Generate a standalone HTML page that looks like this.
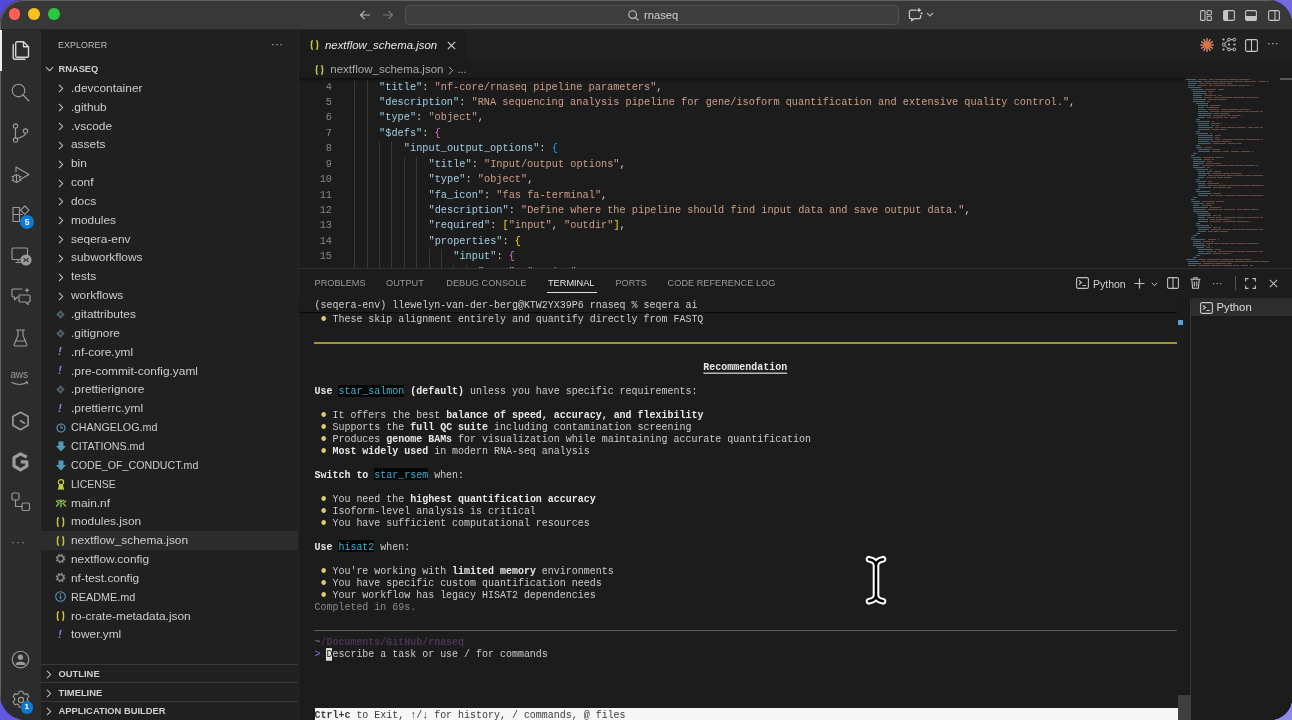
<!DOCTYPE html>
<html><head><meta charset="utf-8">
<style>
*{box-sizing:border-box;margin:0;padding:0}
html,body{width:1292px;height:720px;overflow:hidden}
body{background:linear-gradient(135deg,#5546dc 0%,#6a5ee0 50%,#8d8be8 100%);font-family:"Liberation Sans",sans-serif;position:relative}
.win{will-change:transform;position:absolute;left:0;top:0;width:1292px;height:720px;border-radius:23px 24px 22px 26px;overflow:hidden;background:#1c1c1c}
.frame{position:absolute;left:0;top:0;width:1320px;height:750px;border-radius:23px;box-shadow:inset 1px 1px 0 0 #626262;pointer-events:none}
.abs{position:absolute}
svg{position:absolute;overflow:visible}
.title{left:0;top:0;width:1292px;height:30px;background:#383838;border-bottom:1px solid #262626}
.act{left:0;top:30px;width:41px;height:690px;background:#2c2c2c}
.side{left:41px;top:30px;width:258px;height:690px;background:#202020;border-right:1px solid #252525}
.ed{left:299px;top:30px;width:993px;height:690px;background:#1c1c1c}
.mono{font-family:"Liberation Mono",monospace}
.t{position:absolute;white-space:pre;line-height:1}
.row{position:absolute;left:0;width:257px;height:18.85px;font-size:11.5px;color:#cccccc;line-height:18.85px;white-space:pre}
.row span.n{position:absolute;left:29.5px;top:0}
.ai{stroke:#9a9a9a;fill:none;stroke-width:1.15;stroke-linecap:round;stroke-linejoin:round}
</style></head><body>
<div class="win">
  <!-- TITLE BAR -->
  <div class="abs title"></div>
  <div class="abs" style="left:8.6px;top:8.1px;width:11.6px;height:11.6px;border-radius:50%;background:#fe5f57"></div>
  <div class="abs" style="left:28.1px;top:8.1px;width:11.6px;height:11.6px;border-radius:50%;background:#f7c21c"></div>
  <div class="abs" style="left:48.2px;top:8.1px;width:11.6px;height:11.6px;border-radius:50%;background:#28c840"></div>
  <svg style="left:359px;top:10px" width="12" height="10" viewBox="0 0 12 10"><path d="M11 5H1.5M5.5 1L1.5 5l4 4" stroke="#b8b8b8" stroke-width="1.1" fill="none"/></svg>
  <svg style="left:381.5px;top:10px" width="12" height="10" viewBox="0 0 12 10"><path d="M1 5h9.5M6.5 1l4 4-4 4" stroke="#777" stroke-width="1.1" fill="none"/></svg>
  <div class="abs" style="left:405px;top:5px;width:494px;height:20px;border-radius:4px;background:#3e3e3e;border:1px solid #525252"></div>
  <svg style="left:628px;top:9.5px" width="11" height="11" viewBox="0 0 11 11"><circle cx="4.6" cy="4.6" r="3.8" stroke="#c8c8c8" stroke-width="1.1" fill="none"/><path d="M7.4 7.4l3 3" stroke="#c8c8c8" stroke-width="1.1"/></svg>
  <div class="t" style="left:644px;top:10px;font-size:11.2px;color:#d0d0d0">rnaseq</div>
  <svg style="left:908px;top:7px" width="16" height="15" viewBox="0 0 16 15"><path d="M8.5 3.2H3.2Q1.4 3.2 1.4 5V10Q1.4 11.6 3 11.6H4.2L3.6 13.8 6.6 11.6H11Q12.6 11.6 12.6 10V8" stroke="#c8c8c8" stroke-width="1.25" fill="none" stroke-linejoin="round"/><path d="M11 0.6L11.8 2.3 13.5 3.1 11.8 3.9 11 5.6 10.2 3.9 8.5 3.1 10.2 2.3z" fill="#d0d0d0"/><path d="M13.7 4.8L14.2 5.8 15.2 6.3 14.2 6.8 13.7 7.8 13.2 6.8 12.2 6.3 13.2 5.8z" fill="#d0d0d0"/></svg>
  <svg style="left:926px;top:11.8px" width="8" height="6" viewBox="0 0 8 6"><path d="M1 1l3 3 3-3" stroke="#b0b0b0" stroke-width="1.1" fill="none"/></svg>
  <!-- layout icons -->
  <svg style="left:1200px;top:9.5px" width="12" height="11" viewBox="0 0 12 11"><rect x="0.6" y="0.6" width="4.4" height="9.8" rx="1" stroke="#bdbdbd" stroke-width="1.1" fill="none"/><rect x="7" y="0.6" width="4.4" height="4.2" rx="1" stroke="#bdbdbd" stroke-width="1.1" fill="none"/><rect x="7" y="6.2" width="4.4" height="4.2" rx="1" stroke="#bdbdbd" stroke-width="1.1" fill="none"/></svg>
  <svg style="left:1222.5px;top:9.5px" width="12" height="11" viewBox="0 0 12 11"><rect x="0.6" y="0.6" width="10.8" height="9.8" rx="1.5" stroke="#c5c5c5" stroke-width="1.1" fill="none"/><rect x="0.6" y="0.6" width="4.5" height="9.8" fill="#c5c5c5"/></svg>
  <svg style="left:1245px;top:9.5px" width="12" height="11" viewBox="0 0 12 11"><rect x="0.6" y="0.6" width="10.8" height="9.8" rx="1.5" stroke="#c5c5c5" stroke-width="1.1" fill="none"/><rect x="0.6" y="6" width="10.8" height="4.4" fill="#c5c5c5"/></svg>
  <svg style="left:1267.5px;top:9.5px" width="12" height="11" viewBox="0 0 12 11"><rect x="0.6" y="0.6" width="10.8" height="9.8" rx="1.5" stroke="#c5c5c5" stroke-width="1.1" fill="none"/><path d="M7 0.6v9.8" stroke="#c5c5c5" stroke-width="1.1"/></svg>

  <!-- ACTIVITY BAR -->
  <div class="abs act"></div>
  <div class="abs" style="left:0;top:30px;width:2.2px;height:41px;background:#f0f0f0;z-index:5"></div>
  <!-- explorer -->
  <svg style="left:11.5px;top:41px" width="18" height="19" viewBox="0 0 18 19"><g fill="none" stroke="#d6d6d6" stroke-width="1.4" stroke-linejoin="round" stroke-linecap="round"><path d="M5 0.8H11.5L16.5 5.8V15a1.3 1.3 0 0 1-1.3 1.3H5A1.3 1.3 0 0 1 3.7 15V2.1A1.3 1.3 0 0 1 5 0.8z"/><path d="M11.5 0.8V5.8H16.5"/><path d="M1.2 3.8V16.2a2 2 0 0 0 2 2H13"/></g></svg>
  <!-- search -->
  <svg style="left:11px;top:83px" width="19" height="19" viewBox="0 0 19 19"><circle class="ai" cx="7.5" cy="7.5" r="6.3"/><path class="ai" d="M12 12l6 6"/></svg>
  <!-- scm -->
  <svg style="left:12px;top:123px" width="17" height="20" viewBox="0 0 17 20"><circle class="ai" cx="3.5" cy="3" r="2.2"/><circle class="ai" cx="3.5" cy="17" r="2.2"/><circle class="ai" cx="13.5" cy="8" r="2.2"/><path class="ai" d="M3.5 5.2v9.6M13.5 10.2c0 3-4 3.5-8.5 5.5"/></svg>
  <!-- run debug -->
  <svg style="left:11px;top:166px" width="20" height="18" viewBox="0 0 20 18"><path class="ai" d="M5 5.5V1l13 7.5-8 4.6"/><circle class="ai" cx="5.5" cy="12.5" r="3.6"/><path class="ai" d="M1 10.5h1.5M8.5 10.5H10M1 14.5h1.5M8.5 14.5H10M5.5 9v7"/></svg>
  <!-- extensions -->
  <svg style="left:12px;top:205px" width="19" height="19" viewBox="0 0 19 19"><path class="ai" d="M1 2.5h6.5v7H1zM1 9.5h6.5v7H1zM7.5 9.5H10"/><path class="ai" d="M12.8 1l4.2 4.2-4.2 4.2-4.2-4.2z"/></svg>
  <div class="abs" style="left:20px;top:214.5px;width:14px;height:14px;border-radius:50%;background:#0a7bd6;color:#fff;font-size:8.5px;font-weight:bold;text-align:center;line-height:14px">5</div>
  <!-- remote explorer -->
  <svg style="left:10.5px;top:246.5px" width="22" height="20" viewBox="0 0 22 20"><path class="ai" d="M9.5 12.5H2a1 1 0 0 1-1-1V2a1 1 0 0 1 1-1h13.5a1 1 0 0 1 1 1v6M5 15.5h4.5M7.2 12.5v3"/><circle cx="15" cy="13" r="5.6" fill="#9a9a9a"/><path d="M12.6 11.2l1.8 1.8-1.8 1.8M17.4 11.2l-1.8 1.8 1.8 1.8" stroke="#2c2c2c" stroke-width="1.1" fill="none"/></svg>
  <!-- chat -->
  <svg style="left:11px;top:287px" width="21" height="18" viewBox="0 0 21 18"><path class="ai" d="M11 2H2a1 1 0 0 0-1 1v6a1 1 0 0 0 1 1h1.5v3l3-3H7"/><path class="ai" d="M8 8h10a1 1 0 0 1 1 1v5a1 1 0 0 1-1 1h-1v2.5L14.5 15H9a1 1 0 0 1-1-1z"/><path d="M16 0.5l.8 1.9 1.9.8-1.9.8-.8 1.9-.8-1.9-1.9-.8 1.9-.8z" fill="#9a9a9a"/></svg>
  <!-- testing flask -->
  <svg style="left:13px;top:329px" width="15" height="18" viewBox="0 0 15 18"><path class="ai" d="M3.5 1h8M5 1v5.5L1.2 15.5a1 1 0 0 0 .9 1.5h10.8a1 1 0 0 0 .9-1.5L10 6.5V1M3 12h9"/></svg>
  <!-- aws -->
  <div class="t" style="left:10.5px;top:370px;font-size:10px;color:#9a9a9a;letter-spacing:-0.2px">aws</div>
  <svg style="left:10px;top:381px" width="20" height="5" viewBox="0 0 20 5"><path d="M1.5 1.2c5 2.8 11 2.8 16 0" stroke="#9a9a9a" stroke-width="1.1" fill="none"/><path d="M15.5 0.6l2.3.5-.6 2.2" stroke="#9a9a9a" stroke-width="1" fill="none"/></svg>
  <!-- hex -->
  <svg style="left:11px;top:411px" width="19" height="20" viewBox="0 0 19 20"><path class="ai" style="stroke-width:1.6" d="M9.5 1.2l7.6 4.3v8.8l-7.6 4.4-7.6-4.4V5.5z"/><path class="ai" style="stroke-width:1.6" d="M9.5 9.8l4 2.4"/></svg>
  <!-- G seqera -->
  <svg style="left:11px;top:451.5px" width="19" height="20" viewBox="0 0 19 20"><path d="M15.8 5.2L9.5 1.8 3 5.6V14l6.5 3.8 6.3-3.6V9.8H9.8" stroke="#9c9c9c" stroke-width="3.2" fill="none" stroke-linejoin="round"/></svg>
  <!-- graph -->
  <svg style="left:11px;top:492px" width="20" height="20" viewBox="0 0 20 20"><rect class="ai" x="1" y="1" width="7" height="7" rx="1.5"/><rect class="ai" x="11" y="11" width="7.5" height="7.5" rx="1.5"/><path class="ai" d="M4.5 8v6.5H11"/></svg>
  <div class="t" style="left:11px;top:536px;font-size:12px;color:#999;letter-spacing:1px">···</div>
  <!-- account -->
  <svg style="left:10.5px;top:650px" width="19" height="19" viewBox="0 0 19 19"><circle class="ai" cx="9.5" cy="9.5" r="8.3"/><circle cx="9.5" cy="7.3" r="2.7" fill="#9a9a9a"/><path d="M4.8 13.6c1-2.4 8.4-2.4 9.4 0v1.4H4.8z" fill="#9a9a9a"/></svg>
  <!-- settings -->
  <svg style="left:11px;top:690px" width="20" height="20" viewBox="0 0 20 20"><path class="ai" d="M8.2 1.2h3.6l.5 2.3 1.6.9 2.2-.8 1.8 3.1-1.7 1.6v1.8l1.7 1.6-1.8 3.1-2.2-.8-1.6.9-.5 2.3H8.2l-.5-2.3-1.6-.9-2.2.8-1.8-3.1 1.7-1.6V8.3L2.1 6.7l1.8-3.1 2.2.8 1.6-.9z"/><circle class="ai" cx="10" cy="10" r="2.6"/></svg>
  <div class="abs" style="left:20.5px;top:701px;width:12.5px;height:12.5px;border-radius:50%;background:#0a78d4;color:#fff;font-size:8px;font-weight:bold;text-align:center;line-height:12.5px">1</div>

  <!-- SIDEBAR -->
  <div class="abs side" id="side">
<div class="t" style="left:17px;top:11px;font-size:8.9px;color:#bdbdbd;letter-spacing:0.1px">EXPLORER</div>
<div class="t" style="left:230px;top:9px;font-size:11px;color:#bbb;letter-spacing:0.5px">···</div>
<svg style="left:4px;top:36px" width="9" height="6" viewBox="0 0 9 6"><path d="M0.8 1l3.7 3.7L8.2 1" stroke="#c5c5c5" stroke-width="1.05" fill="none"/></svg>
<div class="t" style="left:17.5px;top:34.5px;font-size:9.3px;color:#d0d0d0;font-weight:bold">RNASEQ</div>
<div class="row" style="top:48.80px"><svg style="left:16.5px;top:5.5px" width="6" height="9" viewBox="0 0 6 9"><path d="M1 0.8l3.6 3.7L1 8.2" stroke="#c5c5c5" stroke-width="1.05" fill="none"/></svg><span class="n" style="transform:scaleX(1.035);transform-origin:0 50%">.devcontainer</span></div>
<div class="row" style="top:67.65px"><svg style="left:16.5px;top:5.5px" width="6" height="9" viewBox="0 0 6 9"><path d="M1 0.8l3.6 3.7L1 8.2" stroke="#c5c5c5" stroke-width="1.05" fill="none"/></svg><span class="n" style="transform:scaleX(1.035);transform-origin:0 50%">.github</span></div>
<div class="row" style="top:86.50px"><svg style="left:16.5px;top:5.5px" width="6" height="9" viewBox="0 0 6 9"><path d="M1 0.8l3.6 3.7L1 8.2" stroke="#c5c5c5" stroke-width="1.05" fill="none"/></svg><span class="n" style="transform:scaleX(1.035);transform-origin:0 50%">.vscode</span></div>
<div class="row" style="top:105.35px"><svg style="left:16.5px;top:5.5px" width="6" height="9" viewBox="0 0 6 9"><path d="M1 0.8l3.6 3.7L1 8.2" stroke="#c5c5c5" stroke-width="1.05" fill="none"/></svg><span class="n" style="transform:scaleX(1.035);transform-origin:0 50%">assets</span></div>
<div class="row" style="top:124.20px"><svg style="left:16.5px;top:5.5px" width="6" height="9" viewBox="0 0 6 9"><path d="M1 0.8l3.6 3.7L1 8.2" stroke="#c5c5c5" stroke-width="1.05" fill="none"/></svg><span class="n" style="transform:scaleX(1.035);transform-origin:0 50%">bin</span></div>
<div class="row" style="top:143.05px"><svg style="left:16.5px;top:5.5px" width="6" height="9" viewBox="0 0 6 9"><path d="M1 0.8l3.6 3.7L1 8.2" stroke="#c5c5c5" stroke-width="1.05" fill="none"/></svg><span class="n" style="transform:scaleX(1.035);transform-origin:0 50%">conf</span></div>
<div class="row" style="top:161.90px"><svg style="left:16.5px;top:5.5px" width="6" height="9" viewBox="0 0 6 9"><path d="M1 0.8l3.6 3.7L1 8.2" stroke="#c5c5c5" stroke-width="1.05" fill="none"/></svg><span class="n" style="transform:scaleX(1.035);transform-origin:0 50%">docs</span></div>
<div class="row" style="top:180.75px"><svg style="left:16.5px;top:5.5px" width="6" height="9" viewBox="0 0 6 9"><path d="M1 0.8l3.6 3.7L1 8.2" stroke="#c5c5c5" stroke-width="1.05" fill="none"/></svg><span class="n" style="transform:scaleX(1.035);transform-origin:0 50%">modules</span></div>
<div class="row" style="top:199.60px"><svg style="left:16.5px;top:5.5px" width="6" height="9" viewBox="0 0 6 9"><path d="M1 0.8l3.6 3.7L1 8.2" stroke="#c5c5c5" stroke-width="1.05" fill="none"/></svg><span class="n" style="transform:scaleX(1.035);transform-origin:0 50%">seqera-env</span></div>
<div class="row" style="top:218.45px"><svg style="left:16.5px;top:5.5px" width="6" height="9" viewBox="0 0 6 9"><path d="M1 0.8l3.6 3.7L1 8.2" stroke="#c5c5c5" stroke-width="1.05" fill="none"/></svg><span class="n" style="transform:scaleX(1.035);transform-origin:0 50%">subworkflows</span></div>
<div class="row" style="top:237.30px"><svg style="left:16.5px;top:5.5px" width="6" height="9" viewBox="0 0 6 9"><path d="M1 0.8l3.6 3.7L1 8.2" stroke="#c5c5c5" stroke-width="1.05" fill="none"/></svg><span class="n" style="transform:scaleX(1.035);transform-origin:0 50%">tests</span></div>
<div class="row" style="top:256.15px"><svg style="left:16.5px;top:5.5px" width="6" height="9" viewBox="0 0 6 9"><path d="M1 0.8l3.6 3.7L1 8.2" stroke="#c5c5c5" stroke-width="1.05" fill="none"/></svg><span class="n" style="transform:scaleX(1.035);transform-origin:0 50%">workflows</span></div>
<div class="row" style="top:275.00px"><svg style="left:15px;top:5px" width="9" height="9" viewBox="0 0 9 9"><path d="M4.5 0.2L8.8 4.5 4.5 8.8 0.2 4.5z" fill="#4f6165"/><circle cx="4.5" cy="4.5" r="1.3" fill="#2a3436"/></svg><span class="n" style="transform:scaleX(1.035);transform-origin:0 50%">.gitattributes</span></div>
<div class="row" style="top:293.85px"><svg style="left:15px;top:5px" width="9" height="9" viewBox="0 0 9 9"><path d="M4.5 0.2L8.8 4.5 4.5 8.8 0.2 4.5z" fill="#4f6165"/><circle cx="4.5" cy="4.5" r="1.3" fill="#2a3436"/></svg><span class="n" style="transform:scaleX(1.035);transform-origin:0 50%">.gitignore</span></div>
<div class="row" style="top:312.70px"><div class="t" style="left:17px;top:3.5px;font-size:11.5px;color:#8d80d8;font-style:italic;font-weight:bold">!</div><span class="n" style="transform:scaleX(1.035);transform-origin:0 50%">.nf-core.yml</span></div>
<div class="row" style="top:331.55px"><div class="t" style="left:17px;top:3.5px;font-size:11.5px;color:#8d80d8;font-style:italic;font-weight:bold">!</div><span class="n" style="transform:scaleX(1.035);transform-origin:0 50%">.pre-commit-config.yaml</span></div>
<div class="row" style="top:350.40px"><svg style="left:15px;top:5px" width="9" height="9" viewBox="0 0 9 9"><path d="M4.5 0.2L8.8 4.5 4.5 8.8 0.2 4.5z" fill="#4f6165"/><circle cx="4.5" cy="4.5" r="1.3" fill="#2a3436"/></svg><span class="n" style="transform:scaleX(1.035);transform-origin:0 50%">.prettierignore</span></div>
<div class="row" style="top:369.25px"><div class="t" style="left:17px;top:3.5px;font-size:11.5px;color:#8d80d8;font-style:italic;font-weight:bold">!</div><span class="n" style="transform:scaleX(1.035);transform-origin:0 50%">.prettierrc.yml</span></div>
<div class="row" style="top:388.10px"><svg style="left:15px;top:4.5px" width="10" height="10" viewBox="0 0 10 10"><circle cx="5" cy="5" r="4" stroke="#519aba" stroke-width="1.2" fill="none"/><path d="M5 2.6V5h2" stroke="#519aba" stroke-width="1.1" fill="none"/></svg><span class="n" style="transform:scaleX(0.933);transform-origin:0 50%">CHANGELOG.md</span></div>
<div class="row" style="top:406.95px"><svg style="left:15px;top:4px" width="10" height="11" viewBox="0 0 10 11"><path d="M2.5 0.5h5v4.5H10L5 10.5 0 5h2.5z" fill="#519aba"/></svg><span class="n" style="transform:scaleX(0.933);transform-origin:0 50%">CITATIONS.md</span></div>
<div class="row" style="top:425.80px"><svg style="left:15px;top:4px" width="10" height="11" viewBox="0 0 10 11"><path d="M2.5 0.5h5v4.5H10L5 10.5 0 5h2.5z" fill="#519aba"/></svg><span class="n" style="transform:scaleX(0.927);transform-origin:0 50%">CODE_OF_CONDUCT.md</span></div>
<div class="row" style="top:444.65px"><svg style="left:16px;top:4px" width="8" height="12" viewBox="0 0 8 12"><circle cx="4" cy="3.2" r="2.6" stroke="#cbcb41" stroke-width="1.3" fill="none"/><path d="M2.2 5.2L0.8 11.2l2.2-1.2 1 1.3 1-1.3 2.2 1.2L5.8 5.2" fill="#cbcb41"/></svg><span class="n" style="transform:scaleX(0.910);transform-origin:0 50%">LICENSE</span></div>
<div class="row" style="top:463.50px"><svg style="left:14px;top:5px" width="12" height="9" viewBox="0 0 12 9"><path d="M1 1.5l3 3-3 3M11 1.5l-3 3 3 3M6 0.5v8M3 1l3 2 3-2" stroke="#8dc149" stroke-width="1.3" fill="none"/></svg><span class="n" style="transform:scaleX(1.035);transform-origin:0 50%">main.nf</span></div>
<div class="row" style="top:482.35px"><svg style="left:14.8px;top:4.6px" width="9" height="10" viewBox="0 0 9 10"><path d="M2.9 0.7Q1.6 0.7 1.6 2V3.8Q1.6 5 0.7 5Q1.6 5 1.6 6.2V8Q1.6 9.3 2.9 9.3M6.1 0.7Q7.4 0.7 7.4 2V3.8Q7.4 5 8.3 5Q7.4 5 7.4 6.2V8Q7.4 9.3 6.1 9.3" stroke="#c6c63e" stroke-width="1.5" fill="none"/></svg><span class="n" style="transform:scaleX(1.035);transform-origin:0 50%">modules.json</span></div>
<div class="row" style="top:501.20px;background:#2c2c2c"><svg style="left:14.8px;top:4.6px" width="9" height="10" viewBox="0 0 9 10"><path d="M2.9 0.7Q1.6 0.7 1.6 2V3.8Q1.6 5 0.7 5Q1.6 5 1.6 6.2V8Q1.6 9.3 2.9 9.3M6.1 0.7Q7.4 0.7 7.4 2V3.8Q7.4 5 8.3 5Q7.4 5 7.4 6.2V8Q7.4 9.3 6.1 9.3" stroke="#c6c63e" stroke-width="1.5" fill="none"/></svg><span class="n" style="transform:scaleX(1.035);transform-origin:0 50%">nextflow_schema.json</span></div>
<div class="row" style="top:520.05px"><svg style="left:14.2px;top:3.3px" width="11" height="11" viewBox="0 0 11 11"><circle cx="5.5" cy="5.5" r="3.6" stroke="#858c8e" stroke-width="2.4" fill="none" stroke-dasharray="1.5 1.3"/><circle cx="5.5" cy="5.5" r="3" stroke="#858c8e" stroke-width="1.3" fill="none"/></svg><span class="n" style="transform:scaleX(1.035);transform-origin:0 50%">nextflow.config</span></div>
<div class="row" style="top:538.90px"><svg style="left:14.2px;top:3.3px" width="11" height="11" viewBox="0 0 11 11"><circle cx="5.5" cy="5.5" r="3.6" stroke="#858c8e" stroke-width="2.4" fill="none" stroke-dasharray="1.5 1.3"/><circle cx="5.5" cy="5.5" r="3" stroke="#858c8e" stroke-width="1.3" fill="none"/></svg><span class="n" style="transform:scaleX(1.035);transform-origin:0 50%">nf-test.config</span></div>
<div class="row" style="top:557.75px"><svg style="left:13.8px;top:3.5px" width="11" height="11" viewBox="0 0 11 11"><circle cx="5.5" cy="5.5" r="4.8" stroke="#5a93ab" stroke-width="1.1" fill="none"/><path d="M5.5 4.6v3.6" stroke="#5a93ab" stroke-width="1.4"/><circle cx="5.5" cy="3" r="0.8" fill="#5a93ab"/></svg><span class="n" style="transform:scaleX(0.941);transform-origin:0 50%">README.md</span></div>
<div class="row" style="top:576.60px"><svg style="left:14.8px;top:4.6px" width="9" height="10" viewBox="0 0 9 10"><path d="M2.9 0.7Q1.6 0.7 1.6 2V3.8Q1.6 5 0.7 5Q1.6 5 1.6 6.2V8Q1.6 9.3 2.9 9.3M6.1 0.7Q7.4 0.7 7.4 2V3.8Q7.4 5 8.3 5Q7.4 5 7.4 6.2V8Q7.4 9.3 6.1 9.3" stroke="#c6c63e" stroke-width="1.5" fill="none"/></svg><span class="n" style="transform:scaleX(1.035);transform-origin:0 50%">ro-crate-metadata.json</span></div>
<div class="row" style="top:595.45px"><div class="t" style="left:17px;top:3.5px;font-size:11.5px;color:#8d80d8;font-style:italic;font-weight:bold">!</div><span class="n" style="transform:scaleX(1.035);transform-origin:0 50%">tower.yml</span></div>
<div class="abs" style="left:0;top:633.5px;width:257px;height:18.6px;border-top:1px solid #3a3a3a"><svg style="left:5px;top:5.5px" width="6" height="9" viewBox="0 0 6 9"><path d="M1 0.8l3.6 3.7L1 8.2" stroke="#c5c5c5" stroke-width="1.05" fill="none"/></svg><div class="t" style="left:17.5px;top:4.5px;font-size:9.4px;color:#cfcfcf;font-weight:bold">OUTLINE</div></div>
<div class="abs" style="left:0;top:652.1px;width:257px;height:18.6px;border-top:1px solid #3a3a3a"><svg style="left:5px;top:5.5px" width="6" height="9" viewBox="0 0 6 9"><path d="M1 0.8l3.6 3.7L1 8.2" stroke="#c5c5c5" stroke-width="1.05" fill="none"/></svg><div class="t" style="left:17.5px;top:4.5px;font-size:9.4px;color:#cfcfcf;font-weight:bold">TIMELINE</div></div>
<div class="abs" style="left:0;top:670.7px;width:257px;height:18.6px;border-top:1px solid #3a3a3a"><svg style="left:5px;top:5.5px" width="6" height="9" viewBox="0 0 6 9"><path d="M1 0.8l3.6 3.7L1 8.2" stroke="#c5c5c5" stroke-width="1.05" fill="none"/></svg><div class="t" style="left:17.5px;top:4.5px;font-size:9.4px;color:#cfcfcf;font-weight:bold">APPLICATION BUILDER</div></div>
  </div>

  <!-- EDITOR -->
  <div class="abs ed" id="ed">
<div class="abs" style="left:-299px;top:-30px;width:1292px;height:720px">
<div class="abs" style="left:299px;top:30px;width:993px;height:30px;background:#202020"></div>
<div class="abs" style="left:299px;top:30px;width:166.5px;height:30px;background:#1c1c1c"></div>
<svg style="left:309.8px;top:40px" width="9" height="10" viewBox="0 0 9 10"><path d="M2.9 0.7Q1.6 0.7 1.6 2V3.8Q1.6 5 0.7 5Q1.6 5 1.6 6.2V8Q1.6 9.3 2.9 9.3M6.1 0.7Q7.4 0.7 7.4 2V3.8Q7.4 5 8.3 5Q7.4 5 7.4 6.2V8Q7.4 9.3 6.1 9.3" stroke="#c6c63e" stroke-width="1.5" fill="none"/></svg>
<div class="t" style="left:325px;top:39.5px;font-size:11.4px;color:#e8e8e8;font-style:italic">nextflow_schema.json</div>
<svg style="left:446.5px;top:41px" width="9" height="9" viewBox="0 0 9 9"><path d="M0.8 0.8l7.4 7.4M8.2 0.8L0.8 8.2" stroke="#cfcfcf" stroke-width="1.1"/></svg>
<svg style="left:1199.5px;top:38px" width="14" height="14" viewBox="0 0 14 14"><g stroke="#cf8570" stroke-width="1.5" stroke-linecap="round"><path d="M7 7L13.20 7.00"/><path d="M7 7L12.37 10.10"/><path d="M7 7L10.10 12.37"/><path d="M7 7L7.00 13.20"/><path d="M7 7L3.90 12.37"/><path d="M7 7L1.63 10.10"/><path d="M7 7L0.80 7.00"/><path d="M7 7L1.63 3.90"/><path d="M7 7L3.90 1.63"/><path d="M7 7L7.00 0.80"/><path d="M7 7L10.10 1.63"/><path d="M7 7L12.37 3.90"/></g><circle cx="7" cy="7" r="3.2" fill="#e36f3a"/></svg>
<svg style="left:1222px;top:38px" width="14" height="13" viewBox="0 0 14 13"><g fill="#c8c8c8"><circle cx="1.5" cy="1.5" r="1.1"/><circle cx="1.5" cy="11.5" r="1.1"/><circle cx="7" cy="6.5" r="1.1"/><circle cx="12.5" cy="6.5" r="1.1"/></g><g fill="none" stroke="#c8c8c8" stroke-width="1"><circle cx="1.8" cy="6.5" r="1.5"/><circle cx="7" cy="1.6" r="1.4"/><circle cx="12.3" cy="1.6" r="1.4"/><circle cx="7" cy="11.4" r="1.4"/><circle cx="12.3" cy="11.4" r="1.4"/><path d="M3 5.5L5.8 2.5M3 7.5L5.8 10.5M8.4 1.6h2.5M8.4 11.4h2.5"/></g></svg>
<svg style="left:1244.5px;top:38.5px" width="13" height="13" viewBox="0 0 13 13"><rect x="0.6" y="0.6" width="11.8" height="11.8" rx="1.5" stroke="#c8c8c8" stroke-width="1.1" fill="none"/><path d="M6.5 0.6v11.8" stroke="#c8c8c8" stroke-width="1.1"/></svg>
<div class="t" style="left:1267px;top:38px;font-size:11px;color:#c8c8c8;letter-spacing:0.3px">···</div>
<svg style="left:314.8px;top:64.5px" width="9" height="10" viewBox="0 0 9 10"><path d="M2.9 0.7Q1.6 0.7 1.6 2V3.8Q1.6 5 0.7 5Q1.6 5 1.6 6.2V8Q1.6 9.3 2.9 9.3M6.1 0.7Q7.4 0.7 7.4 2V3.8Q7.4 5 8.3 5Q7.4 5 7.4 6.2V8Q7.4 9.3 6.1 9.3" stroke="#c6c63e" stroke-width="1.5" fill="none"/></svg>
<div class="t" style="left:330.3px;top:64px;font-size:11.5px;color:#a9a9a9">nextflow_schema.json</div>
<svg style="left:447.5px;top:65.5px" width="6" height="9" viewBox="0 0 6 9"><path d="M1 0.8l3.6 3.7L1 8.2" stroke="#a9a9a9" stroke-width="1" fill="none"/></svg>
<div class="t" style="left:457.5px;top:64px;font-size:11px;color:#a9a9a9">...</div>
<div class="t mono" style="left:299px;top:79.50px;width:33px;text-align:right;font-size:10.28px;line-height:15.43px;color:#858585">4</div>
<div class="abs" style="left:354.40px;top:79.50px;width:1px;height:15.43px;background:#373737"></div>
<div class="abs" style="left:366.76px;top:79.50px;width:1px;height:15.43px;background:#373737"></div>
<div class="t mono" style="left:379.12px;top:79.50px;font-size:10.28px;line-height:15.43px"><span style="color:#a2cde3">"title"</span><span style="color:#cccccc">: </span><span style="color:#cd9e88">"nf-core/rnaseq pipeline parameters"</span><span style="color:#cccccc">,</span></div>
<div class="t mono" style="left:299px;top:94.93px;width:33px;text-align:right;font-size:10.28px;line-height:15.43px;color:#858585">5</div>
<div class="abs" style="left:354.40px;top:94.93px;width:1px;height:15.43px;background:#373737"></div>
<div class="abs" style="left:366.76px;top:94.93px;width:1px;height:15.43px;background:#373737"></div>
<div class="t mono" style="left:379.12px;top:94.93px;font-size:10.28px;line-height:15.43px"><span style="color:#a2cde3">"description"</span><span style="color:#cccccc">: </span><span style="color:#cd9e88">"RNA sequencing analysis pipeline for gene/isoform quantification and extensive quality control."</span><span style="color:#cccccc">,</span></div>
<div class="t mono" style="left:299px;top:110.36px;width:33px;text-align:right;font-size:10.28px;line-height:15.43px;color:#858585">6</div>
<div class="abs" style="left:354.40px;top:110.36px;width:1px;height:15.43px;background:#373737"></div>
<div class="abs" style="left:366.76px;top:110.36px;width:1px;height:15.43px;background:#373737"></div>
<div class="t mono" style="left:379.12px;top:110.36px;font-size:10.28px;line-height:15.43px"><span style="color:#a2cde3">"type"</span><span style="color:#cccccc">: </span><span style="color:#cd9e88">"object"</span><span style="color:#cccccc">,</span></div>
<div class="t mono" style="left:299px;top:125.79px;width:33px;text-align:right;font-size:10.28px;line-height:15.43px;color:#858585">7</div>
<div class="abs" style="left:354.40px;top:125.79px;width:1px;height:15.43px;background:#373737"></div>
<div class="abs" style="left:366.76px;top:125.79px;width:1px;height:15.43px;background:#373737"></div>
<div class="t mono" style="left:379.12px;top:125.79px;font-size:10.28px;line-height:15.43px"><span style="color:#a2cde3">"$defs"</span><span style="color:#cccccc">: </span><span style="color:#da70d6">{</span></div>
<div class="t mono" style="left:299px;top:141.22px;width:33px;text-align:right;font-size:10.28px;line-height:15.43px;color:#858585">8</div>
<div class="abs" style="left:354.40px;top:141.22px;width:1px;height:15.43px;background:#373737"></div>
<div class="abs" style="left:366.76px;top:141.22px;width:1px;height:15.43px;background:#373737"></div>
<div class="abs" style="left:379.12px;top:141.22px;width:1px;height:15.43px;background:#373737"></div>
<div class="abs" style="left:391.48px;top:141.22px;width:1px;height:15.43px;background:#373737"></div>
<div class="t mono" style="left:403.84px;top:141.22px;font-size:10.28px;line-height:15.43px"><span style="color:#a2cde3">"input_output_options"</span><span style="color:#cccccc">: </span><span style="color:#179fff">{</span></div>
<div class="t mono" style="left:299px;top:156.65px;width:33px;text-align:right;font-size:10.28px;line-height:15.43px;color:#858585">9</div>
<div class="abs" style="left:354.40px;top:156.65px;width:1px;height:15.43px;background:#373737"></div>
<div class="abs" style="left:366.76px;top:156.65px;width:1px;height:15.43px;background:#373737"></div>
<div class="abs" style="left:379.12px;top:156.65px;width:1px;height:15.43px;background:#373737"></div>
<div class="abs" style="left:391.48px;top:156.65px;width:1px;height:15.43px;background:#373737"></div>
<div class="abs" style="left:403.84px;top:156.65px;width:1px;height:15.43px;background:#373737"></div>
<div class="abs" style="left:416.20px;top:156.65px;width:1px;height:15.43px;background:#373737"></div>
<div class="t mono" style="left:428.56px;top:156.65px;font-size:10.28px;line-height:15.43px"><span style="color:#a2cde3">"title"</span><span style="color:#cccccc">: </span><span style="color:#cd9e88">"Input/output options"</span><span style="color:#cccccc">,</span></div>
<div class="t mono" style="left:299px;top:172.08px;width:33px;text-align:right;font-size:10.28px;line-height:15.43px;color:#858585">10</div>
<div class="abs" style="left:354.40px;top:172.08px;width:1px;height:15.43px;background:#373737"></div>
<div class="abs" style="left:366.76px;top:172.08px;width:1px;height:15.43px;background:#373737"></div>
<div class="abs" style="left:379.12px;top:172.08px;width:1px;height:15.43px;background:#373737"></div>
<div class="abs" style="left:391.48px;top:172.08px;width:1px;height:15.43px;background:#373737"></div>
<div class="abs" style="left:403.84px;top:172.08px;width:1px;height:15.43px;background:#373737"></div>
<div class="abs" style="left:416.20px;top:172.08px;width:1px;height:15.43px;background:#373737"></div>
<div class="t mono" style="left:428.56px;top:172.08px;font-size:10.28px;line-height:15.43px"><span style="color:#a2cde3">"type"</span><span style="color:#cccccc">: </span><span style="color:#cd9e88">"object"</span><span style="color:#cccccc">,</span></div>
<div class="t mono" style="left:299px;top:187.51px;width:33px;text-align:right;font-size:10.28px;line-height:15.43px;color:#858585">11</div>
<div class="abs" style="left:354.40px;top:187.51px;width:1px;height:15.43px;background:#373737"></div>
<div class="abs" style="left:366.76px;top:187.51px;width:1px;height:15.43px;background:#373737"></div>
<div class="abs" style="left:379.12px;top:187.51px;width:1px;height:15.43px;background:#373737"></div>
<div class="abs" style="left:391.48px;top:187.51px;width:1px;height:15.43px;background:#373737"></div>
<div class="abs" style="left:403.84px;top:187.51px;width:1px;height:15.43px;background:#373737"></div>
<div class="abs" style="left:416.20px;top:187.51px;width:1px;height:15.43px;background:#373737"></div>
<div class="t mono" style="left:428.56px;top:187.51px;font-size:10.28px;line-height:15.43px"><span style="color:#a2cde3">"fa_icon"</span><span style="color:#cccccc">: </span><span style="color:#cd9e88">"fas fa-terminal"</span><span style="color:#cccccc">,</span></div>
<div class="t mono" style="left:299px;top:202.94px;width:33px;text-align:right;font-size:10.28px;line-height:15.43px;color:#858585">12</div>
<div class="abs" style="left:354.40px;top:202.94px;width:1px;height:15.43px;background:#373737"></div>
<div class="abs" style="left:366.76px;top:202.94px;width:1px;height:15.43px;background:#373737"></div>
<div class="abs" style="left:379.12px;top:202.94px;width:1px;height:15.43px;background:#373737"></div>
<div class="abs" style="left:391.48px;top:202.94px;width:1px;height:15.43px;background:#373737"></div>
<div class="abs" style="left:403.84px;top:202.94px;width:1px;height:15.43px;background:#373737"></div>
<div class="abs" style="left:416.20px;top:202.94px;width:1px;height:15.43px;background:#373737"></div>
<div class="t mono" style="left:428.56px;top:202.94px;font-size:10.28px;line-height:15.43px"><span style="color:#a2cde3">"description"</span><span style="color:#cccccc">: </span><span style="color:#cd9e88">"Define where the pipeline should find input data and save output data."</span><span style="color:#cccccc">,</span></div>
<div class="t mono" style="left:299px;top:218.37px;width:33px;text-align:right;font-size:10.28px;line-height:15.43px;color:#858585">13</div>
<div class="abs" style="left:354.40px;top:218.37px;width:1px;height:15.43px;background:#373737"></div>
<div class="abs" style="left:366.76px;top:218.37px;width:1px;height:15.43px;background:#373737"></div>
<div class="abs" style="left:379.12px;top:218.37px;width:1px;height:15.43px;background:#373737"></div>
<div class="abs" style="left:391.48px;top:218.37px;width:1px;height:15.43px;background:#373737"></div>
<div class="abs" style="left:403.84px;top:218.37px;width:1px;height:15.43px;background:#373737"></div>
<div class="abs" style="left:416.20px;top:218.37px;width:1px;height:15.43px;background:#373737"></div>
<div class="t mono" style="left:428.56px;top:218.37px;font-size:10.28px;line-height:15.43px"><span style="color:#a2cde3">"required"</span><span style="color:#cccccc">: </span><span style="color:#ffd700">[</span><span style="color:#cd9e88">"input"</span><span style="color:#cccccc">, </span><span style="color:#cd9e88">"outdir"</span><span style="color:#ffd700">]</span><span style="color:#cccccc">,</span></div>
<div class="t mono" style="left:299px;top:233.80px;width:33px;text-align:right;font-size:10.28px;line-height:15.43px;color:#858585">14</div>
<div class="abs" style="left:354.40px;top:233.80px;width:1px;height:15.43px;background:#373737"></div>
<div class="abs" style="left:366.76px;top:233.80px;width:1px;height:15.43px;background:#373737"></div>
<div class="abs" style="left:379.12px;top:233.80px;width:1px;height:15.43px;background:#373737"></div>
<div class="abs" style="left:391.48px;top:233.80px;width:1px;height:15.43px;background:#373737"></div>
<div class="abs" style="left:403.84px;top:233.80px;width:1px;height:15.43px;background:#373737"></div>
<div class="abs" style="left:416.20px;top:233.80px;width:1px;height:15.43px;background:#373737"></div>
<div class="t mono" style="left:428.56px;top:233.80px;font-size:10.28px;line-height:15.43px"><span style="color:#a2cde3">"properties"</span><span style="color:#cccccc">: </span><span style="color:#ffd700">{</span></div>
<div class="t mono" style="left:299px;top:249.23px;width:33px;text-align:right;font-size:10.28px;line-height:15.43px;color:#858585">15</div>
<div class="abs" style="left:354.40px;top:249.23px;width:1px;height:15.43px;background:#373737"></div>
<div class="abs" style="left:366.76px;top:249.23px;width:1px;height:15.43px;background:#373737"></div>
<div class="abs" style="left:379.12px;top:249.23px;width:1px;height:15.43px;background:#373737"></div>
<div class="abs" style="left:391.48px;top:249.23px;width:1px;height:15.43px;background:#373737"></div>
<div class="abs" style="left:403.84px;top:249.23px;width:1px;height:15.43px;background:#373737"></div>
<div class="abs" style="left:416.20px;top:249.23px;width:1px;height:15.43px;background:#373737"></div>
<div class="abs" style="left:428.56px;top:249.23px;width:1px;height:15.43px;background:#373737"></div>
<div class="abs" style="left:440.92px;top:249.23px;width:1px;height:15.43px;background:#373737"></div>
<div class="t mono" style="left:453.28px;top:249.23px;font-size:10.28px;line-height:15.43px"><span style="color:#a2cde3">"input"</span><span style="color:#cccccc">: </span><span style="color:#da70d6">{</span></div>
<div class="t mono" style="left:299px;top:264.66px;width:33px;text-align:right;font-size:10.28px;line-height:15.43px;color:#858585">16</div>
<div class="abs" style="left:354.40px;top:264.66px;width:1px;height:15.43px;background:#373737"></div>
<div class="abs" style="left:366.76px;top:264.66px;width:1px;height:15.43px;background:#373737"></div>
<div class="abs" style="left:379.12px;top:264.66px;width:1px;height:15.43px;background:#373737"></div>
<div class="abs" style="left:391.48px;top:264.66px;width:1px;height:15.43px;background:#373737"></div>
<div class="abs" style="left:403.84px;top:264.66px;width:1px;height:15.43px;background:#373737"></div>
<div class="abs" style="left:416.20px;top:264.66px;width:1px;height:15.43px;background:#373737"></div>
<div class="abs" style="left:428.56px;top:264.66px;width:1px;height:15.43px;background:#373737"></div>
<div class="abs" style="left:440.92px;top:264.66px;width:1px;height:15.43px;background:#373737"></div>
<div class="abs" style="left:453.28px;top:264.66px;width:1px;height:15.43px;background:#373737"></div>
<div class="abs" style="left:465.64px;top:264.66px;width:1px;height:15.43px;background:#373737"></div>
<div class="t mono" style="left:478.00px;top:264.66px;font-size:10.28px;line-height:15.43px"><span style="color:#a2cde3">"type"</span><span style="color:#cccccc">: </span><span style="color:#cd9e88">"string"</span><span style="color:#cccccc">,</span></div>
<div class="abs" style="left:299px;top:78px;width:885px;height:4px;background:linear-gradient(rgba(0,0,0,0.45),rgba(0,0,0,0))"></div>
<div class="abs" style="left:1186.0px;top:79px;width:9.5px;height:1px;background:#48616f"></div><div class="abs" style="left:1197.5px;top:79px;width:9.9px;height:1px;background:#5e4840"></div><div class="abs" style="left:1208.5px;top:79px;width:5.3px;height:1px;background:#5e4840"></div><div class="abs" style="left:1214.9px;top:79px;width:13.2px;height:1px;background:#5e4840"></div><div class="abs" style="left:1229.1px;top:79px;width:8.7px;height:1px;background:#5e4840"></div><div class="abs" style="left:1239.0px;top:79px;width:9.8px;height:1px;background:#5e4840"></div><div class="abs" style="left:1249.9px;top:79px;width:1.1px;height:1px;background:#5e4840"></div><div class="abs" style="left:1188.4px;top:81px;width:13.7px;height:1px;background:#48616f"></div><div class="abs" style="left:1204.1px;top:81px;width:6.6px;height:1px;background:#5e4840"></div><div class="abs" style="left:1211.7px;top:81px;width:6.3px;height:1px;background:#5e4840"></div><div class="abs" style="left:1219.2px;top:81px;width:14.0px;height:1px;background:#5e4840"></div><div class="abs" style="left:1234.2px;top:81px;width:8.7px;height:1px;background:#5e4840"></div><div class="abs" style="left:1244.0px;top:81px;width:12.4px;height:1px;background:#5e4840"></div><div class="abs" style="left:1257.5px;top:81px;width:8.8px;height:1px;background:#5e4840"></div><div class="abs" style="left:1267.4px;top:81px;width:1.8px;height:1px;background:#5e4840"></div><div class="abs" style="left:1188.4px;top:83px;width:8.4px;height:1px;background:#48616f"></div><div class="abs" style="left:1198.8px;top:83px;width:6.3px;height:1px;background:#5e4840"></div><div class="abs" style="left:1206.2px;top:83px;width:5.5px;height:1px;background:#5e4840"></div><div class="abs" style="left:1212.8px;top:83px;width:13.3px;height:1px;background:#5e4840"></div><div class="abs" style="left:1227.2px;top:83px;width:5.2px;height:1px;background:#5e4840"></div><div class="abs" style="left:1188.4px;top:85px;width:6.3px;height:1px;background:#48616f"></div><div class="abs" style="left:1196.7px;top:85px;width:10.7px;height:1px;background:#5e4840"></div><div class="abs" style="left:1208.5px;top:85px;width:4.6px;height:1px;background:#5e4840"></div><div class="abs" style="left:1214.3px;top:85px;width:11.6px;height:1px;background:#5e4840"></div><div class="abs" style="left:1226.9px;top:85px;width:9.9px;height:1px;background:#5e4840"></div><div class="abs" style="left:1237.9px;top:85px;width:7.0px;height:1px;background:#5e4840"></div><div class="abs" style="left:1246.1px;top:85px;width:4.3px;height:1px;background:#5e4840"></div><div class="abs" style="left:1251.5px;top:85px;width:1.9px;height:1px;background:#5e4840"></div><div class="abs" style="left:1188.4px;top:87px;width:12.6px;height:1px;background:#48616f"></div><div class="abs" style="left:1190.8px;top:89px;width:12.6px;height:1px;background:#48616f"></div><div class="abs" style="left:1205.4px;top:89px;width:11.1px;height:1px;background:#5e4840"></div><div class="abs" style="left:1217.6px;top:89px;width:6.7px;height:1px;background:#5e4840"></div><div class="abs" style="left:1193.2px;top:91px;width:12.6px;height:1px;background:#48616f"></div><div class="abs" style="left:1207.8px;top:91px;width:6.3px;height:1px;background:#5e4840"></div><div class="abs" style="left:1193.2px;top:93px;width:13.7px;height:1px;background:#48616f"></div><div class="abs" style="left:1208.9px;top:93px;width:3.2px;height:1px;background:#5e4840"></div><div class="abs" style="left:1193.2px;top:95px;width:8.4px;height:1px;background:#48616f"></div><div class="abs" style="left:1203.6px;top:95px;width:12.8px;height:1px;background:#5e4840"></div><div class="abs" style="left:1217.5px;top:95px;width:4.0px;height:1px;background:#5e4840"></div><div class="abs" style="left:1193.2px;top:97px;width:8.4px;height:1px;background:#48616f"></div><div class="abs" style="left:1203.6px;top:97px;width:8.9px;height:1px;background:#5e4840"></div><div class="abs" style="left:1213.6px;top:97px;width:6.6px;height:1px;background:#5e4840"></div><div class="abs" style="left:1221.3px;top:97px;width:10.7px;height:1px;background:#5e4840"></div><div class="abs" style="left:1233.1px;top:97px;width:11.8px;height:1px;background:#5e4840"></div><div class="abs" style="left:1246.0px;top:97px;width:12.2px;height:1px;background:#5e4840"></div><div class="abs" style="left:1193.2px;top:99px;width:12.6px;height:1px;background:#48616f"></div><div class="abs" style="left:1207.8px;top:99px;width:9.1px;height:1px;background:#5e4840"></div><div class="abs" style="left:1218.0px;top:99px;width:7.9px;height:1px;background:#5e4840"></div><div class="abs" style="left:1193.2px;top:101px;width:11.6px;height:1px;background:#48616f"></div><div class="abs" style="left:1206.8px;top:101px;width:3.2px;height:1px;background:#5e4840"></div><div class="abs" style="left:1195.6px;top:103px;width:12.6px;height:1px;background:#48616f"></div><div class="abs" style="left:1198.0px;top:105px;width:9.5px;height:1px;background:#48616f"></div><div class="abs" style="left:1209.5px;top:105px;width:11.6px;height:1px;background:#5e4840"></div><div class="abs" style="left:1198.0px;top:107px;width:6.3px;height:1px;background:#48616f"></div><div class="abs" style="left:1206.3px;top:107px;width:12.6px;height:1px;background:#5e4840"></div><div class="abs" style="left:1198.0px;top:109px;width:8.4px;height:1px;background:#48616f"></div><div class="abs" style="left:1208.4px;top:109px;width:11.0px;height:1px;background:#5e4840"></div><div class="abs" style="left:1220.5px;top:109px;width:7.3px;height:1px;background:#5e4840"></div><div class="abs" style="left:1228.9px;top:109px;width:9.4px;height:1px;background:#5e4840"></div><div class="abs" style="left:1239.4px;top:109px;width:9.7px;height:1px;background:#5e4840"></div><div class="abs" style="left:1250.2px;top:109px;width:0.2px;height:1px;background:#5e4840"></div><div class="abs" style="left:1198.0px;top:111px;width:9.5px;height:1px;background:#48616f"></div><div class="abs" style="left:1209.5px;top:111px;width:10.3px;height:1px;background:#5e4840"></div><div class="abs" style="left:1220.9px;top:111px;width:13.9px;height:1px;background:#5e4840"></div><div class="abs" style="left:1235.9px;top:111px;width:6.7px;height:1px;background:#5e4840"></div><div class="abs" style="left:1243.6px;top:111px;width:5.2px;height:1px;background:#5e4840"></div><div class="abs" style="left:1250.0px;top:111px;width:8.8px;height:1px;background:#5e4840"></div><div class="abs" style="left:1259.9px;top:111px;width:3.1px;height:1px;background:#5e4840"></div><div class="abs" style="left:1198.0px;top:113px;width:13.7px;height:1px;background:#48616f"></div><div class="abs" style="left:1213.7px;top:113px;width:4.9px;height:1px;background:#5e4840"></div><div class="abs" style="left:1219.6px;top:113px;width:9.8px;height:1px;background:#5e4840"></div><div class="abs" style="left:1198.0px;top:115px;width:12.6px;height:1px;background:#48616f"></div><div class="abs" style="left:1212.6px;top:115px;width:13.0px;height:1px;background:#5e4840"></div><div class="abs" style="left:1226.7px;top:115px;width:4.2px;height:1px;background:#5e4840"></div><div class="abs" style="left:1232.0px;top:115px;width:8.3px;height:1px;background:#5e4840"></div><div class="abs" style="left:1241.3px;top:115px;width:0.7px;height:1px;background:#5e4840"></div><div class="abs" style="left:1198.0px;top:117px;width:7.4px;height:1px;background:#48616f"></div><div class="abs" style="left:1207.3px;top:117px;width:4.4px;height:1px;background:#5e4840"></div><div class="abs" style="left:1212.9px;top:117px;width:10.1px;height:1px;background:#5e4840"></div><div class="abs" style="left:1224.1px;top:117px;width:4.4px;height:1px;background:#5e4840"></div><div class="abs" style="left:1229.7px;top:117px;width:7.1px;height:1px;background:#5e4840"></div><div class="abs" style="left:1195.6px;top:119px;width:4.2px;height:1px;background:#48616f"></div><div class="abs" style="left:1195.6px;top:121px;width:14.7px;height:1px;background:#48616f"></div><div class="abs" style="left:1212.3px;top:121px;width:2.1px;height:1px;background:#5e4840"></div><div class="abs" style="left:1198.0px;top:123px;width:10.5px;height:1px;background:#48616f"></div><div class="abs" style="left:1210.5px;top:123px;width:9.1px;height:1px;background:#5e4840"></div><div class="abs" style="left:1220.7px;top:123px;width:0.3px;height:1px;background:#5e4840"></div><div class="abs" style="left:1198.0px;top:125px;width:10.5px;height:1px;background:#48616f"></div><div class="abs" style="left:1210.5px;top:125px;width:4.1px;height:1px;background:#5e4840"></div><div class="abs" style="left:1215.7px;top:125px;width:3.2px;height:1px;background:#5e4840"></div><div class="abs" style="left:1198.0px;top:127px;width:14.7px;height:1px;background:#48616f"></div><div class="abs" style="left:1214.7px;top:127px;width:4.3px;height:1px;background:#5e4840"></div><div class="abs" style="left:1220.1px;top:127px;width:6.0px;height:1px;background:#5e4840"></div><div class="abs" style="left:1227.2px;top:127px;width:8.1px;height:1px;background:#5e4840"></div><div class="abs" style="left:1236.4px;top:127px;width:10.1px;height:1px;background:#5e4840"></div><div class="abs" style="left:1247.6px;top:127px;width:5.6px;height:1px;background:#5e4840"></div><div class="abs" style="left:1254.2px;top:127px;width:4.4px;height:1px;background:#5e4840"></div><div class="abs" style="left:1259.8px;top:127px;width:3.2px;height:1px;background:#5e4840"></div><div class="abs" style="left:1198.0px;top:129px;width:11.6px;height:1px;background:#48616f"></div><div class="abs" style="left:1211.5px;top:129px;width:7.6px;height:1px;background:#5e4840"></div><div class="abs" style="left:1220.3px;top:129px;width:5.4px;height:1px;background:#5e4840"></div><div class="abs" style="left:1195.6px;top:131px;width:4.2px;height:1px;background:#48616f"></div><div class="abs" style="left:1195.6px;top:133px;width:12.6px;height:1px;background:#48616f"></div><div class="abs" style="left:1210.2px;top:133px;width:2.1px;height:1px;background:#5e4840"></div><div class="abs" style="left:1198.0px;top:135px;width:14.7px;height:1px;background:#48616f"></div><div class="abs" style="left:1214.7px;top:135px;width:6.3px;height:1px;background:#5e4840"></div><div class="abs" style="left:1198.0px;top:137px;width:14.7px;height:1px;background:#48616f"></div><div class="abs" style="left:1214.7px;top:137px;width:4.2px;height:1px;background:#5e4840"></div><div class="abs" style="left:1198.0px;top:139px;width:14.7px;height:1px;background:#48616f"></div><div class="abs" style="left:1214.7px;top:139px;width:6.7px;height:1px;background:#5e4840"></div><div class="abs" style="left:1222.5px;top:139px;width:10.3px;height:1px;background:#5e4840"></div><div class="abs" style="left:1234.0px;top:139px;width:11.2px;height:1px;background:#5e4840"></div><div class="abs" style="left:1246.2px;top:139px;width:13.4px;height:1px;background:#5e4840"></div><div class="abs" style="left:1260.7px;top:139px;width:2.3px;height:1px;background:#5e4840"></div><div class="abs" style="left:1198.0px;top:141px;width:10.5px;height:1px;background:#48616f"></div><div class="abs" style="left:1210.5px;top:141px;width:9.2px;height:1px;background:#5e4840"></div><div class="abs" style="left:1220.8px;top:141px;width:9.5px;height:1px;background:#5e4840"></div><div class="abs" style="left:1231.4px;top:141px;width:0.1px;height:1px;background:#5e4840"></div><div class="abs" style="left:1198.0px;top:143px;width:12.6px;height:1px;background:#48616f"></div><div class="abs" style="left:1212.6px;top:143px;width:13.9px;height:1px;background:#5e4840"></div><div class="abs" style="left:1227.6px;top:143px;width:7.1px;height:1px;background:#5e4840"></div><div class="abs" style="left:1235.8px;top:143px;width:6.2px;height:1px;background:#5e4840"></div><div class="abs" style="left:1195.6px;top:145px;width:4.2px;height:1px;background:#48616f"></div><div class="abs" style="left:1195.6px;top:147px;width:6.3px;height:1px;background:#48616f"></div><div class="abs" style="left:1203.9px;top:147px;width:8.4px;height:1px;background:#5e4840"></div><div class="abs" style="left:1198.0px;top:149px;width:11.6px;height:1px;background:#48616f"></div><div class="abs" style="left:1211.5px;top:149px;width:8.7px;height:1px;background:#5e4840"></div><div class="abs" style="left:1198.0px;top:151px;width:11.6px;height:1px;background:#48616f"></div><div class="abs" style="left:1211.5px;top:151px;width:10.1px;height:1px;background:#5e4840"></div><div class="abs" style="left:1222.7px;top:151px;width:6.8px;height:1px;background:#5e4840"></div><div class="abs" style="left:1230.6px;top:151px;width:8.9px;height:1px;background:#5e4840"></div><div class="abs" style="left:1240.6px;top:151px;width:9.9px;height:1px;background:#5e4840"></div><div class="abs" style="left:1251.6px;top:151px;width:0.9px;height:1px;background:#5e4840"></div><div class="abs" style="left:1193.2px;top:153px;width:4.2px;height:1px;background:#48616f"></div><div class="abs" style="left:1190.8px;top:155px;width:4.2px;height:1px;background:#48616f"></div><div class="abs" style="left:1190.8px;top:157px;width:10.5px;height:1px;background:#48616f"></div><div class="abs" style="left:1203.3px;top:157px;width:10.3px;height:1px;background:#5e4840"></div><div class="abs" style="left:1214.7px;top:157px;width:7.0px;height:1px;background:#5e4840"></div><div class="abs" style="left:1222.8px;top:157px;width:1.5px;height:1px;background:#5e4840"></div><div class="abs" style="left:1193.2px;top:159px;width:8.4px;height:1px;background:#48616f"></div><div class="abs" style="left:1203.6px;top:159px;width:7.6px;height:1px;background:#5e4840"></div><div class="abs" style="left:1212.3px;top:159px;width:1.8px;height:1px;background:#5e4840"></div><div class="abs" style="left:1193.2px;top:161px;width:11.6px;height:1px;background:#48616f"></div><div class="abs" style="left:1206.8px;top:161px;width:5.2px;height:1px;background:#5e4840"></div><div class="abs" style="left:1193.2px;top:163px;width:10.5px;height:1px;background:#48616f"></div><div class="abs" style="left:1205.7px;top:163px;width:7.0px;height:1px;background:#5e4840"></div><div class="abs" style="left:1213.8px;top:163px;width:7.6px;height:1px;background:#5e4840"></div><div class="abs" style="left:1193.2px;top:165px;width:6.3px;height:1px;background:#48616f"></div><div class="abs" style="left:1201.5px;top:165px;width:13.7px;height:1px;background:#5e4840"></div><div class="abs" style="left:1216.3px;top:165px;width:10.8px;height:1px;background:#5e4840"></div><div class="abs" style="left:1228.3px;top:165px;width:5.3px;height:1px;background:#5e4840"></div><div class="abs" style="left:1234.7px;top:165px;width:9.0px;height:1px;background:#5e4840"></div><div class="abs" style="left:1244.8px;top:165px;width:10.5px;height:1px;background:#5e4840"></div><div class="abs" style="left:1256.4px;top:165px;width:1.8px;height:1px;background:#5e4840"></div><div class="abs" style="left:1193.2px;top:167px;width:11.6px;height:1px;background:#48616f"></div><div class="abs" style="left:1206.8px;top:167px;width:3.2px;height:1px;background:#5e4840"></div><div class="abs" style="left:1195.6px;top:169px;width:12.6px;height:1px;background:#48616f"></div><div class="abs" style="left:1210.2px;top:169px;width:2.1px;height:1px;background:#5e4840"></div><div class="abs" style="left:1198.0px;top:171px;width:7.4px;height:1px;background:#48616f"></div><div class="abs" style="left:1207.3px;top:171px;width:5.0px;height:1px;background:#5e4840"></div><div class="abs" style="left:1213.5px;top:171px;width:7.2px;height:1px;background:#5e4840"></div><div class="abs" style="left:1198.0px;top:173px;width:11.6px;height:1px;background:#48616f"></div><div class="abs" style="left:1211.5px;top:173px;width:10.7px;height:1px;background:#5e4840"></div><div class="abs" style="left:1223.4px;top:173px;width:6.2px;height:1px;background:#5e4840"></div><div class="abs" style="left:1230.7px;top:173px;width:11.3px;height:1px;background:#5e4840"></div><div class="abs" style="left:1198.0px;top:175px;width:8.4px;height:1px;background:#48616f"></div><div class="abs" style="left:1208.4px;top:175px;width:4.8px;height:1px;background:#5e4840"></div><div class="abs" style="left:1214.3px;top:175px;width:11.4px;height:1px;background:#5e4840"></div><div class="abs" style="left:1226.8px;top:175px;width:6.2px;height:1px;background:#5e4840"></div><div class="abs" style="left:1234.1px;top:175px;width:9.7px;height:1px;background:#5e4840"></div><div class="abs" style="left:1244.9px;top:175px;width:6.7px;height:1px;background:#5e4840"></div><div class="abs" style="left:1252.7px;top:175px;width:10.3px;height:1px;background:#5e4840"></div><div class="abs" style="left:1198.0px;top:177px;width:6.3px;height:1px;background:#48616f"></div><div class="abs" style="left:1206.3px;top:177px;width:9.3px;height:1px;background:#5e4840"></div><div class="abs" style="left:1216.7px;top:177px;width:5.9px;height:1px;background:#5e4840"></div><div class="abs" style="left:1223.7px;top:177px;width:7.8px;height:1px;background:#5e4840"></div><div class="abs" style="left:1195.6px;top:179px;width:4.2px;height:1px;background:#48616f"></div><div class="abs" style="left:1195.6px;top:181px;width:10.5px;height:1px;background:#48616f"></div><div class="abs" style="left:1208.1px;top:181px;width:4.2px;height:1px;background:#5e4840"></div><div class="abs" style="left:1198.0px;top:183px;width:7.4px;height:1px;background:#48616f"></div><div class="abs" style="left:1207.3px;top:183px;width:12.1px;height:1px;background:#5e4840"></div><div class="abs" style="left:1220.5px;top:183px;width:0.5px;height:1px;background:#5e4840"></div><div class="abs" style="left:1198.0px;top:185px;width:8.4px;height:1px;background:#48616f"></div><div class="abs" style="left:1208.4px;top:185px;width:8.2px;height:1px;background:#5e4840"></div><div class="abs" style="left:1217.7px;top:185px;width:9.2px;height:1px;background:#5e4840"></div><div class="abs" style="left:1228.0px;top:185px;width:12.5px;height:1px;background:#5e4840"></div><div class="abs" style="left:1241.6px;top:185px;width:8.6px;height:1px;background:#5e4840"></div><div class="abs" style="left:1251.3px;top:185px;width:10.3px;height:1px;background:#5e4840"></div><div class="abs" style="left:1262.8px;top:185px;width:0.2px;height:1px;background:#5e4840"></div><div class="abs" style="left:1198.0px;top:187px;width:12.6px;height:1px;background:#48616f"></div><div class="abs" style="left:1212.6px;top:187px;width:4.4px;height:1px;background:#5e4840"></div><div class="abs" style="left:1218.1px;top:187px;width:8.1px;height:1px;background:#5e4840"></div><div class="abs" style="left:1227.3px;top:187px;width:4.2px;height:1px;background:#5e4840"></div><div class="abs" style="left:1195.6px;top:189px;width:4.2px;height:1px;background:#48616f"></div><div class="abs" style="left:1195.6px;top:191px;width:14.7px;height:1px;background:#48616f"></div><div class="abs" style="left:1198.0px;top:193px;width:12.6px;height:1px;background:#48616f"></div><div class="abs" style="left:1212.6px;top:193px;width:8.4px;height:1px;background:#5e4840"></div><div class="abs" style="left:1198.0px;top:195px;width:9.5px;height:1px;background:#48616f"></div><div class="abs" style="left:1209.5px;top:195px;width:4.3px;height:1px;background:#5e4840"></div><div class="abs" style="left:1214.9px;top:195px;width:8.6px;height:1px;background:#5e4840"></div><div class="abs" style="left:1224.5px;top:195px;width:11.5px;height:1px;background:#5e4840"></div><div class="abs" style="left:1237.2px;top:195px;width:11.5px;height:1px;background:#5e4840"></div><div class="abs" style="left:1249.8px;top:195px;width:13.2px;height:1px;background:#5e4840"></div><div class="abs" style="left:1193.2px;top:197px;width:4.2px;height:1px;background:#48616f"></div><div class="abs" style="left:1190.8px;top:199px;width:4.2px;height:1px;background:#48616f"></div><div class="abs" style="left:1190.8px;top:201px;width:9.5px;height:1px;background:#48616f"></div><div class="abs" style="left:1202.2px;top:201px;width:12.6px;height:1px;background:#5e4840"></div><div class="abs" style="left:1216.0px;top:201px;width:8.3px;height:1px;background:#5e4840"></div><div class="abs" style="left:1193.2px;top:203px;width:10.5px;height:1px;background:#48616f"></div><div class="abs" style="left:1205.7px;top:203px;width:5.2px;height:1px;background:#5e4840"></div><div class="abs" style="left:1212.0px;top:203px;width:2.1px;height:1px;background:#5e4840"></div><div class="abs" style="left:1193.2px;top:205px;width:6.3px;height:1px;background:#48616f"></div><div class="abs" style="left:1201.5px;top:205px;width:10.5px;height:1px;background:#5e4840"></div><div class="abs" style="left:1193.2px;top:207px;width:14.7px;height:1px;background:#48616f"></div><div class="abs" style="left:1209.9px;top:207px;width:11.6px;height:1px;background:#5e4840"></div><div class="abs" style="left:1193.2px;top:209px;width:12.6px;height:1px;background:#48616f"></div><div class="abs" style="left:1207.8px;top:209px;width:9.8px;height:1px;background:#5e4840"></div><div class="abs" style="left:1218.7px;top:209px;width:4.1px;height:1px;background:#5e4840"></div><div class="abs" style="left:1223.9px;top:209px;width:11.5px;height:1px;background:#5e4840"></div><div class="abs" style="left:1236.5px;top:209px;width:5.7px;height:1px;background:#5e4840"></div><div class="abs" style="left:1243.3px;top:209px;width:7.0px;height:1px;background:#5e4840"></div><div class="abs" style="left:1251.4px;top:209px;width:6.8px;height:1px;background:#5e4840"></div><div class="abs" style="left:1193.2px;top:211px;width:14.7px;height:1px;background:#48616f"></div><div class="abs" style="left:1195.6px;top:213px;width:14.7px;height:1px;background:#48616f"></div><div class="abs" style="left:1198.0px;top:215px;width:12.6px;height:1px;background:#48616f"></div><div class="abs" style="left:1212.6px;top:215px;width:4.5px;height:1px;background:#5e4840"></div><div class="abs" style="left:1218.2px;top:215px;width:2.8px;height:1px;background:#5e4840"></div><div class="abs" style="left:1198.0px;top:217px;width:7.4px;height:1px;background:#48616f"></div><div class="abs" style="left:1207.3px;top:217px;width:7.4px;height:1px;background:#5e4840"></div><div class="abs" style="left:1215.9px;top:217px;width:6.5px;height:1px;background:#5e4840"></div><div class="abs" style="left:1223.5px;top:217px;width:12.6px;height:1px;background:#5e4840"></div><div class="abs" style="left:1237.2px;top:217px;width:8.8px;height:1px;background:#5e4840"></div><div class="abs" style="left:1247.1px;top:217px;width:11.8px;height:1px;background:#5e4840"></div><div class="abs" style="left:1260.0px;top:217px;width:3.0px;height:1px;background:#5e4840"></div><div class="abs" style="left:1198.0px;top:219px;width:9.5px;height:1px;background:#48616f"></div><div class="abs" style="left:1209.5px;top:219px;width:5.2px;height:1px;background:#5e4840"></div><div class="abs" style="left:1215.8px;top:219px;width:12.9px;height:1px;background:#5e4840"></div><div class="abs" style="left:1229.7px;top:219px;width:1.8px;height:1px;background:#5e4840"></div><div class="abs" style="left:1198.0px;top:221px;width:9.5px;height:1px;background:#48616f"></div><div class="abs" style="left:1209.5px;top:221px;width:11.9px;height:1px;background:#5e4840"></div><div class="abs" style="left:1222.5px;top:221px;width:13.2px;height:1px;background:#5e4840"></div><div class="abs" style="left:1236.8px;top:221px;width:12.1px;height:1px;background:#5e4840"></div><div class="abs" style="left:1249.9px;top:221px;width:0.5px;height:1px;background:#5e4840"></div><div class="abs" style="left:1195.6px;top:223px;width:4.2px;height:1px;background:#48616f"></div><div class="abs" style="left:1195.6px;top:225px;width:13.7px;height:1px;background:#48616f"></div><div class="abs" style="left:1211.2px;top:225px;width:1.1px;height:1px;background:#5e4840"></div><div class="abs" style="left:1198.0px;top:227px;width:12.6px;height:1px;background:#48616f"></div><div class="abs" style="left:1212.6px;top:227px;width:4.5px;height:1px;background:#5e4840"></div><div class="abs" style="left:1218.2px;top:227px;width:2.8px;height:1px;background:#5e4840"></div><div class="abs" style="left:1198.0px;top:229px;width:10.5px;height:1px;background:#48616f"></div><div class="abs" style="left:1210.5px;top:229px;width:10.2px;height:1px;background:#5e4840"></div><div class="abs" style="left:1221.8px;top:229px;width:9.2px;height:1px;background:#5e4840"></div><div class="abs" style="left:1232.1px;top:229px;width:4.5px;height:1px;background:#5e4840"></div><div class="abs" style="left:1237.7px;top:229px;width:7.2px;height:1px;background:#5e4840"></div><div class="abs" style="left:1246.0px;top:229px;width:12.2px;height:1px;background:#5e4840"></div><div class="abs" style="left:1259.3px;top:229px;width:3.7px;height:1px;background:#5e4840"></div><div class="abs" style="left:1198.0px;top:231px;width:8.4px;height:1px;background:#48616f"></div><div class="abs" style="left:1208.4px;top:231px;width:4.5px;height:1px;background:#5e4840"></div><div class="abs" style="left:1214.0px;top:231px;width:4.5px;height:1px;background:#5e4840"></div><div class="abs" style="left:1219.6px;top:231px;width:8.8px;height:1px;background:#5e4840"></div><div class="abs" style="left:1195.6px;top:233px;width:4.2px;height:1px;background:#48616f"></div><div class="abs" style="left:1193.2px;top:235px;width:4.2px;height:1px;background:#48616f"></div><div class="abs" style="left:1190.8px;top:237px;width:4.2px;height:1px;background:#48616f"></div><div class="abs" style="left:1190.8px;top:239px;width:14.7px;height:1px;background:#48616f"></div><div class="abs" style="left:1207.5px;top:239px;width:8.9px;height:1px;background:#5e4840"></div><div class="abs" style="left:1217.5px;top:239px;width:0.5px;height:1px;background:#5e4840"></div><div class="abs" style="left:1193.2px;top:241px;width:7.4px;height:1px;background:#48616f"></div><div class="abs" style="left:1202.5px;top:241px;width:7.5px;height:1px;background:#5e4840"></div><div class="abs" style="left:1211.2px;top:241px;width:2.9px;height:1px;background:#5e4840"></div><div class="abs" style="left:1193.2px;top:243px;width:10.5px;height:1px;background:#48616f"></div><div class="abs" style="left:1205.7px;top:243px;width:7.6px;height:1px;background:#5e4840"></div><div class="abs" style="left:1214.4px;top:243px;width:5.9px;height:1px;background:#5e4840"></div><div class="abs" style="left:1221.4px;top:243px;width:7.3px;height:1px;background:#5e4840"></div><div class="abs" style="left:1229.8px;top:243px;width:5.2px;height:1px;background:#5e4840"></div><div class="abs" style="left:1236.1px;top:243px;width:9.6px;height:1px;background:#5e4840"></div><div class="abs" style="left:1246.8px;top:243px;width:11.2px;height:1px;background:#5e4840"></div><div class="abs" style="left:1193.2px;top:245px;width:12.6px;height:1px;background:#48616f"></div><div class="abs" style="left:1207.8px;top:245px;width:2.1px;height:1px;background:#5e4840"></div><div class="abs" style="left:1195.6px;top:247px;width:8.4px;height:1px;background:#48616f"></div><div class="abs" style="left:1206.0px;top:247px;width:4.4px;height:1px;background:#5e4840"></div><div class="abs" style="left:1211.5px;top:247px;width:0.8px;height:1px;background:#5e4840"></div><div class="abs" style="left:1198.0px;top:249px;width:14.7px;height:1px;background:#48616f"></div><div class="abs" style="left:1214.7px;top:249px;width:6.3px;height:1px;background:#5e4840"></div><div class="abs" style="left:1198.0px;top:251px;width:6.3px;height:1px;background:#48616f"></div><div class="abs" style="left:1206.3px;top:251px;width:10.2px;height:1px;background:#5e4840"></div><div class="abs" style="left:1217.6px;top:251px;width:8.3px;height:1px;background:#5e4840"></div><div class="abs" style="left:1227.0px;top:251px;width:7.7px;height:1px;background:#5e4840"></div><div class="abs" style="left:1235.9px;top:251px;width:9.0px;height:1px;background:#5e4840"></div><div class="abs" style="left:1245.9px;top:251px;width:11.0px;height:1px;background:#5e4840"></div><div class="abs" style="left:1258.1px;top:251px;width:4.9px;height:1px;background:#5e4840"></div><div class="abs" style="left:1198.0px;top:253px;width:12.6px;height:1px;background:#48616f"></div><div class="abs" style="left:1212.6px;top:253px;width:8.6px;height:1px;background:#5e4840"></div><div class="abs" style="left:1222.3px;top:253px;width:6.5px;height:1px;background:#5e4840"></div><div class="abs" style="left:1229.9px;top:253px;width:1.6px;height:1px;background:#5e4840"></div><div class="abs" style="left:1195.6px;top:255px;width:4.2px;height:1px;background:#48616f"></div><div class="abs" style="left:1193.2px;top:257px;width:4.2px;height:1px;background:#48616f"></div><div class="abs" style="left:1186.0px;top:259px;width:9.5px;height:1px;background:#48616f"></div><div class="abs" style="left:1197.5px;top:259px;width:8.3px;height:1px;background:#5e4840"></div><div class="abs" style="left:1206.8px;top:259px;width:12.8px;height:1px;background:#5e4840"></div><div class="abs" style="left:1220.7px;top:259px;width:13.4px;height:1px;background:#5e4840"></div><div class="abs" style="left:1235.2px;top:259px;width:7.7px;height:1px;background:#5e4840"></div><div class="abs" style="left:1244.0px;top:259px;width:7.0px;height:1px;background:#5e4840"></div><div class="abs" style="left:1188.4px;top:261px;width:10.5px;height:1px;background:#48616f"></div><div class="abs" style="left:1200.9px;top:261px;width:5.2px;height:1px;background:#5e4840"></div><div class="abs" style="left:1207.2px;top:261px;width:10.9px;height:1px;background:#5e4840"></div><div class="abs" style="left:1219.2px;top:261px;width:13.4px;height:1px;background:#5e4840"></div><div class="abs" style="left:1233.7px;top:261px;width:11.3px;height:1px;background:#5e4840"></div><div class="abs" style="left:1246.1px;top:261px;width:12.5px;height:1px;background:#5e4840"></div><div class="abs" style="left:1259.7px;top:261px;width:9.3px;height:1px;background:#5e4840"></div><div class="abs" style="left:1188.4px;top:263px;width:12.6px;height:1px;background:#48616f"></div><div class="abs" style="left:1203.0px;top:263px;width:10.7px;height:1px;background:#5e4840"></div><div class="abs" style="left:1214.8px;top:263px;width:11.3px;height:1px;background:#5e4840"></div><div class="abs" style="left:1227.2px;top:263px;width:5.2px;height:1px;background:#5e4840"></div><div class="abs" style="left:1188.4px;top:265px;width:7.4px;height:1px;background:#48616f"></div><div class="abs" style="left:1197.8px;top:265px;width:12.1px;height:1px;background:#5e4840"></div><div class="abs" style="left:1211.0px;top:265px;width:11.2px;height:1px;background:#5e4840"></div><div class="abs" style="left:1223.2px;top:265px;width:8.7px;height:1px;background:#5e4840"></div><div class="abs" style="left:1233.1px;top:265px;width:6.4px;height:1px;background:#5e4840"></div><div class="abs" style="left:1240.5px;top:265px;width:7.9px;height:1px;background:#5e4840"></div><div class="abs" style="left:1249.5px;top:265px;width:3.9px;height:1px;background:#5e4840"></div>
<div class="abs" style="left:1280px;top:78px;width:12px;height:2px;background:#5a5a5a"></div>
<div class="abs" style="left:299px;top:268px;width:993px;height:452px;background:#1c1c1c;border-top:1px solid #333"></div>
<div class="t" style="left:314.5px;top:279px;font-size:9.2px;color:#9a9a9a">PROBLEMS</div>
<div class="t" style="left:386.0px;top:279px;font-size:9.2px;color:#9a9a9a">OUTPUT</div>
<div class="t" style="left:446.3px;top:279px;font-size:9.2px;color:#9a9a9a">DEBUG CONSOLE</div>
<div class="t" style="left:548.0px;top:279px;font-size:9.2px;color:#e7e7e7">TERMINAL</div>
<div class="t" style="left:615.4px;top:279px;font-size:9.2px;color:#9a9a9a">PORTS</div>
<div class="t" style="left:667.6px;top:279px;font-size:9.2px;color:#9a9a9a">CODE REFERENCE LOG</div>
<div class="abs" style="left:546.5px;top:292px;width:50.5px;height:1.3px;background:#e0e0e0"></div>
<svg style="left:1076px;top:277px" width="13" height="12" viewBox="0 0 13 12"><rect x="0.6" y="0.6" width="11.8" height="10.8" rx="1.5" stroke="#c0c0c0" stroke-width="1.1" fill="none"/><path d="M3 3.5l2.5 2-2.5 2M6.5 8.5h3.5" stroke="#c0c0c0" stroke-width="1.1" fill="none"/></svg>
<div class="t" style="left:1093px;top:278.5px;font-size:10.5px;color:#d0d0d0">Python</div>
<svg style="left:1134px;top:278px" width="11" height="11" viewBox="0 0 11 11"><path d="M5.5 0.5v10M0.5 5.5h10" stroke="#c0c0c0" stroke-width="1.2"/></svg>
<svg style="left:1150.5px;top:281.5px" width="7" height="5" viewBox="0 0 7 5"><path d="M0.7 0.8l2.8 2.8 2.8-2.8" stroke="#c0c0c0" stroke-width="1" fill="none"/></svg>
<svg style="left:1167px;top:277px" width="12" height="12" viewBox="0 0 12 12"><rect x="0.6" y="0.6" width="10.8" height="10.8" rx="1.5" stroke="#c0c0c0" stroke-width="1.1" fill="none"/><path d="M6 0.6v10.8" stroke="#c0c0c0" stroke-width="1.1"/></svg>
<svg style="left:1190px;top:277px" width="11" height="12" viewBox="0 0 11 12"><path d="M0.5 2.2h10M3.8 2.2V0.8h3.4v1.4M1.8 2.2l.8 9h5.8l.8-9M4.3 4.5v5M6.7 4.5v5" stroke="#c0c0c0" stroke-width="1.1" fill="none"/></svg>
<div class="t" style="left:1212px;top:278.5px;font-size:10px;color:#c0c0c0;letter-spacing:0.2px">···</div>
<div class="abs" style="left:1234.5px;top:276px;width:1px;height:14px;background:#555"></div>
<svg style="left:1245px;top:277.5px" width="11" height="11" viewBox="0 0 11 11"><path d="M0.6 3.5V0.6h2.9M7.5 0.6h2.9v2.9M10.4 7.5v2.9H7.5M3.5 10.4H0.6V7.5" stroke="#c0c0c0" stroke-width="1.1" fill="none"/></svg>
<svg style="left:1269px;top:278.5px" width="9" height="9" viewBox="0 0 9 9"><path d="M0.8 0.8l7.4 7.4M8.2 0.8L0.8 8.2" stroke="#c0c0c0" stroke-width="1.1"/></svg>
<div class="abs" style="left:1190px;top:298px;width:1px;height:422px;background:#353535"></div>
<div class="abs" style="left:1191px;top:298px;width:101px;height:18px;background:#2d2d2d;border-top-left-radius:4px"></div>
<svg style="left:1200px;top:301.5px" width="13" height="12" viewBox="0 0 13 12"><rect x="0.6" y="0.6" width="11.8" height="10.8" rx="1.5" stroke="#c8c8c8" stroke-width="1.1" fill="none"/><path d="M3 3.5l2.5 2-2.5 2M6.5 8.5h3.5" stroke="#c8c8c8" stroke-width="1.1" fill="none"/></svg>
<div class="t" style="left:1216.5px;top:302px;font-size:11.3px;color:#dcdcdc">Python</div>
<div class="abs" style="left:299px;top:298px;width:878px;height:14px;background:#1c1c1c;box-shadow:0 1px 1px #0a0a0a"></div>
<div class="t mono" style="left:314.50px;top:299.6px;font-size:9.98px;line-height:12px;color:#cfcfcf;transform:scaleY(1.15);transform-origin:0 50%">(seqera-env) llewelyn-van-der-berg@KTW2YX39P6 rnaseq % seqera ai</div>
<div class="abs" style="left:338.46px;top:384.66px;width:65.89px;height:12px;background:#050505"></div>
<div class="abs" style="left:374.40px;top:468.49px;width:53.91px;height:12px;background:#050505"></div>
<div class="abs" style="left:338.46px;top:540.34px;width:35.94px;height:12px;background:#050505"></div>
<div class="t mono" style="left:314.50px;top:314.10px;font-size:9.98px;line-height:11.976px;color:#cccccc;transform:scaleY(1.15);transform-origin:0 50%;"> <span style="color:#d9d067;display:inline-block;transform:translate(0.6px,0.9px) scale(1.65)">•</span> These skip alignment entirely and quantify directly from FASTQ</div>
<div class="abs" style="left:314px;top:342.3px;width:863px;height:1.3px;background:#9c9632"></div>
<div class="t mono" style="left:314.50px;top:362.00px;font-size:9.98px;line-height:11.976px;color:#cccccc;transform:scaleY(1.15);transform-origin:0 50%;">                                                                 <b style="color:#e8e8e8;text-decoration:underline;text-underline-offset:1.5px">Recommendation</b></div>
<div class="t mono" style="left:314.50px;top:385.96px;font-size:9.98px;line-height:11.976px;color:#cccccc;transform:scaleY(1.15);transform-origin:0 50%;"><b style="color:#e8e8e8">Use</b> <span style="color:#3ab4d6">star_salmon</span> <b style="color:#e8e8e8">(default)</b> unless you have specific requirements:</div>
<div class="t mono" style="left:314.50px;top:409.91px;font-size:9.98px;line-height:11.976px;color:#cccccc;transform:scaleY(1.15);transform-origin:0 50%;"> <span style="color:#d9d067;display:inline-block;transform:translate(0.6px,0.9px) scale(1.65)">•</span> It offers the best <b style="color:#e8e8e8">balance of speed, accuracy, and flexibility</b></div>
<div class="t mono" style="left:314.50px;top:421.88px;font-size:9.98px;line-height:11.976px;color:#cccccc;transform:scaleY(1.15);transform-origin:0 50%;"> <span style="color:#d9d067;display:inline-block;transform:translate(0.6px,0.9px) scale(1.65)">•</span> Supports the <b style="color:#e8e8e8">full QC suite</b> including contamination screening</div>
<div class="t mono" style="left:314.50px;top:433.86px;font-size:9.98px;line-height:11.976px;color:#cccccc;transform:scaleY(1.15);transform-origin:0 50%;"> <span style="color:#d9d067;display:inline-block;transform:translate(0.6px,0.9px) scale(1.65)">•</span> Produces <b style="color:#e8e8e8">genome BAMs</b> for visualization while maintaining accurate quantification</div>
<div class="t mono" style="left:314.50px;top:445.84px;font-size:9.98px;line-height:11.976px;color:#cccccc;transform:scaleY(1.15);transform-origin:0 50%;"> <span style="color:#d9d067;display:inline-block;transform:translate(0.6px,0.9px) scale(1.65)">•</span> <b style="color:#e8e8e8">Most widely used</b> in modern RNA-seq analysis</div>
<div class="t mono" style="left:314.50px;top:469.79px;font-size:9.98px;line-height:11.976px;color:#cccccc;transform:scaleY(1.15);transform-origin:0 50%;"><b style="color:#e8e8e8">Switch to</b> <span style="color:#3ab4d6">star_rsem</span> when:</div>
<div class="t mono" style="left:314.50px;top:493.74px;font-size:9.98px;line-height:11.976px;color:#cccccc;transform:scaleY(1.15);transform-origin:0 50%;"> <span style="color:#d9d067;display:inline-block;transform:translate(0.6px,0.9px) scale(1.65)">•</span> You need the <b style="color:#e8e8e8">highest quantification accuracy</b></div>
<div class="t mono" style="left:314.50px;top:505.72px;font-size:9.98px;line-height:11.976px;color:#cccccc;transform:scaleY(1.15);transform-origin:0 50%;"> <span style="color:#d9d067;display:inline-block;transform:translate(0.6px,0.9px) scale(1.65)">•</span> Isoform-level analysis is critical</div>
<div class="t mono" style="left:314.50px;top:517.69px;font-size:9.98px;line-height:11.976px;color:#cccccc;transform:scaleY(1.15);transform-origin:0 50%;"> <span style="color:#d9d067;display:inline-block;transform:translate(0.6px,0.9px) scale(1.65)">•</span> You have sufficient computational resources</div>
<div class="t mono" style="left:314.50px;top:541.64px;font-size:9.98px;line-height:11.976px;color:#cccccc;transform:scaleY(1.15);transform-origin:0 50%;"><b style="color:#e8e8e8">Use</b> <span style="color:#3ab4d6">hisat2</span> when:</div>
<div class="t mono" style="left:314.50px;top:565.60px;font-size:9.98px;line-height:11.976px;color:#cccccc;transform:scaleY(1.15);transform-origin:0 50%;"> <span style="color:#d9d067;display:inline-block;transform:translate(0.6px,0.9px) scale(1.65)">•</span> You're working with <b style="color:#e8e8e8">limited memory</b> environments</div>
<div class="t mono" style="left:314.50px;top:577.57px;font-size:9.98px;line-height:11.976px;color:#cccccc;transform:scaleY(1.15);transform-origin:0 50%;"> <span style="color:#d9d067;display:inline-block;transform:translate(0.6px,0.9px) scale(1.65)">•</span> You have specific custom quantification needs</div>
<div class="t mono" style="left:314.50px;top:589.55px;font-size:9.98px;line-height:11.976px;color:#cccccc;transform:scaleY(1.15);transform-origin:0 50%;"> <span style="color:#d9d067;display:inline-block;transform:translate(0.6px,0.9px) scale(1.65)">•</span> Your workflow has legacy HISAT2 dependencies</div>
<div class="t mono" style="left:314.50px;top:601.52px;font-size:9.98px;line-height:11.976px;color:#cccccc;transform:scaleY(1.15);transform-origin:0 50%;"><span style="color:#8a8a8a">Completed in 69s.</span></div>
<div class="abs" style="left:314px;top:630px;width:863px;height:1px;background:#5a5a5a"></div>
<div class="t mono" style="left:314.50px;top:637.45px;font-size:9.98px;line-height:11.976px;color:#cccccc;transform:scaleY(1.15);transform-origin:0 50%;"><span style="color:#8a8a8a">~</span><b style="color:#4a3452">/Documents/GitHub/rnaseq</b></div>
<div class="t mono" style="left:314.50px;top:649.43px;font-size:9.98px;line-height:11.976px;color:#cccccc;transform:scaleY(1.15);transform-origin:0 50%;"><span style="color:#7b7bf0">&gt;</span> <span style="background:#e0e0e0;color:#1c1c1c">D</span>escribe a task or use / for commands</div>
<div class="abs" style="left:1178px;top:320px;width:5px;height:5px;background:#5aa0d8"></div>
<div class="abs" style="left:314.5px;top:708px;width:863px;height:12px;background:#f7f7f7"></div>
<div class="t mono" style="left:314.50px;top:709.5px;font-size:9.98px;line-height:12px;color:#3a3a3a;transform:scaleY(1.12);transform-origin:0 50%"><b>Ctrl+c</b> to Exit, ↑/↓ for history, / commands, @ files</div>
<div class="abs" style="left:1178px;top:694.5px;width:12.5px;height:26px;background:#3f3f3f"></div>
</div>
  </div>
  <svg style="left:866px;top:556px" width="20" height="49" viewBox="0 0 20 49"><path d="M3 3.2Q10 4.5 10 9.5Q10 4.5 17 3.2M10 8v33M3 45.3Q10 44 10 39Q10 44 17 45.3" stroke="#ffffff" stroke-width="6.6" fill="none" stroke-linecap="round" stroke-linejoin="round"/><path d="M3 3.2Q10 4.5 10 9.5Q10 4.5 17 3.2M10 8v33M3 45.3Q10 44 10 39Q10 44 17 45.3" stroke="#000" stroke-width="2.6" fill="none" stroke-linecap="round" stroke-linejoin="round"/></svg>
  <div class="frame"></div>
</div>
</body></html>
